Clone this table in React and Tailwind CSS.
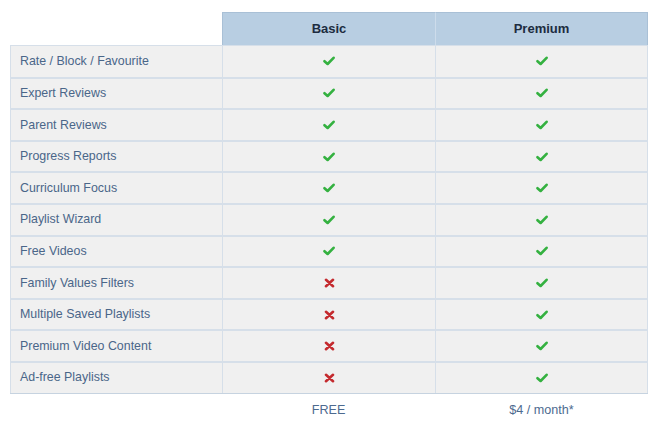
import React from "react";

const rows = [
  ["Rate / Block / Favourite", true],
  ["Expert Reviews", true],
  ["Parent Reviews", true],
  ["Progress Reports", true],
  ["Curriculum Focus", true],
  ["Playlist Wizard", true],
  ["Free Videos", true],
  ["Family Values Filters", false],
  ["Multiple Saved Playlists", false],
  ["Premium Video Content", false],
  ["Ad-free Playlists", false],
];

function Check() {
  return (
    <svg width="12" height="10" viewBox="0 0 12 10">
      <path d="M1.5 5.2 L4.6 8 L10.6 1.8" fill="none" stroke="#34b140" strokeWidth="2.6" strokeLinecap="round" strokeLinejoin="round" />
    </svg>
  );
}

function Cross() {
  return (
    <svg width="11" height="10" viewBox="0 0 11 10">
      <path d="M2 1.8 L9 8.2 M9 1.8 L2 8.2" fill="none" stroke="#c42a2e" strokeWidth="2.6" strokeLinecap="round" />
    </svg>
  );
}

export default function App() {
  return (
    <div className="w-[655px] h-[422px] bg-white pt-[12px] pl-[10px]" style={{ fontFamily: '"Liberation Sans", Arial, sans-serif' }}>
      <div className="grid grid-cols-[212px_213px_213px] w-[638px]">
        <div className="h-[33px]" />
        <div className="h-[33px] bg-[#b8cee2] border-t border-l border-[#a9c0d6] flex items-center justify-center text-[13px] font-bold text-[#1c2c40]">Basic</div>
        <div className="h-[33px] bg-[#b8cee2] border-t border-l border-r border-t-[#a9c0d6] border-r-[#a9c0d6] border-l-[#cddceb] flex items-center justify-center text-[13px] font-bold text-[#1c2c40]">Premium</div>
      </div>
      <div className="w-[638px] border-b border-[#c6d3e0]">
        {rows.map(([label, basic], i) => (
          <div key={i} className={"grid grid-cols-[212px_213px_213px] h-[31.6px] bg-[#f0f0f0] border-[#d6dfe9] " + (i === 0 ? "border-t" : "border-t-2")}>
            <div className="flex items-center pl-[9px] text-[12.4px] text-[#4a6689] border-l border-[#d6dfe9]">{label}</div>
            <div className="flex items-center justify-center border-l border-[#d6dfe9]">{basic ? <Check /> : <Cross />}</div>
            <div className="flex items-center justify-center border-l border-r border-[#d6dfe9]"><Check /></div>
          </div>
        ))}
      </div>
      <div className="grid grid-cols-[212px_213px_213px] w-[638px] pt-[7px]">
        <div />
        <div className="text-center text-[12.6px] text-[#4d6a8f]">FREE</div>
        <div className="text-center text-[12.6px] text-[#4d6a8f]">$4 / month*</div>
      </div>
    </div>
  );
}
